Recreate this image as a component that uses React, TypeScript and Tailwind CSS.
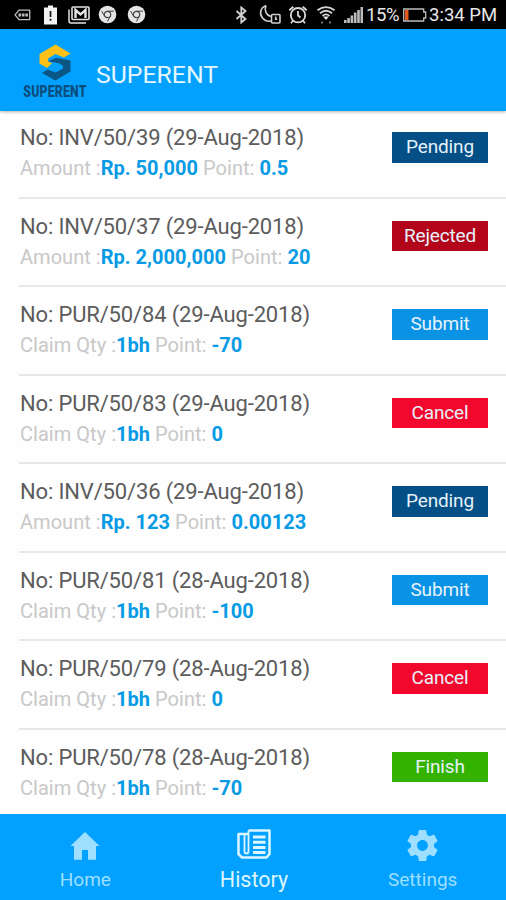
import type { ReactNode } from "react";

type Status = "Pending" | "Rejected" | "Submit" | "Cancel" | "Finish";

interface Entry {
  no: string;
  label: string;
  value: string;
  point: string;
  status: Status;
}

const badgeColors: Record<Status, string> = {
  Pending: "bg-[#034f86]",
  Rejected: "bg-[#b30519]",
  Submit: "bg-[#0a92e4]",
  Cancel: "bg-[#f2082d]",
  Finish: "bg-[#34b200]",
};

const entries: Entry[] = [
  { no: "INV/50/39 (29-Aug-2018)", label: "Amount :", value: "Rp. 50,000", point: "0.5", status: "Pending" },
  { no: "INV/50/37 (29-Aug-2018)", label: "Amount :", value: "Rp. 2,000,000", point: "20", status: "Rejected" },
  { no: "PUR/50/84 (29-Aug-2018)", label: "Claim Qty :", value: "1bh", point: "-70", status: "Submit" },
  { no: "PUR/50/83 (29-Aug-2018)", label: "Claim Qty :", value: "1bh", point: "0", status: "Cancel" },
  { no: "INV/50/36 (29-Aug-2018)", label: "Amount :", value: "Rp. 123", point: "0.00123", status: "Pending" },
  { no: "PUR/50/81 (28-Aug-2018)", label: "Claim Qty :", value: "1bh", point: "-100", status: "Submit" },
  { no: "PUR/50/79 (28-Aug-2018)", label: "Claim Qty :", value: "1bh", point: "0", status: "Cancel" },
  { no: "PUR/50/78 (28-Aug-2018)", label: "Claim Qty :", value: "1bh", point: "-70", status: "Finish" },
];

function ChromeIcon() {
  return (
    <svg width="19" height="19" viewBox="0 0 19 19">
      <circle cx="9.5" cy="9.5" r="8.8" fill="#e4e4e4" />
      <circle cx="9.5" cy="9.5" r="3.2" fill="#e4e4e4" stroke="#444" strokeWidth="1.2" />
      <path d="M9.5 6.2h6.500M6.600 11.200 3.600 6M12.300 11.300 9.400 16.500" stroke="#444" strokeWidth="1" />
    </svg>
  );
}

function StatusBar() {
  return (
    <div className="flex h-[28.5px] shrink-0 items-center bg-black pt-px pl-[14px] text-[#e8e8e8]">
      <svg width="17" height="12" viewBox="0 0 17 12" fill="none" stroke="#bdbdbd" strokeWidth="1.3">
        <path d="M5 1.2h10.7v9.4H5L1 5.9z" strokeLinejoin="round" />
        <path d="M4.500 5.9h9.500" strokeWidth="3" strokeDasharray="2.6 .8" />
      </svg>
      <svg className="ml-[13px]" width="13" height="20" viewBox="0 0 13 20">
        <path d="M4 .5h5v2h4v17H0v-17h4z" fill="#f2f2f2" />
        <path d="M6.5 6v6M6.5 13.7v2" stroke="#111" strokeWidth="1.7" />
      </svg>
      <svg className="ml-[11px]" width="22" height="18" viewBox="0 0 22 18" fill="none" stroke="#e4e4e4">
        <path d="M1 3.5v11.5q0 2 2 2h15" strokeWidth="1.5" />
        <rect x="4" y="1" width="17" height="12.5" rx="1" strokeWidth="1.6" />
        <path d="M7.5 12V4l5 4.4L17.500 4v8" strokeWidth="2.4" />
      </svg>
      <div className="ml-[8px] flex gap-[10px]">
        <ChromeIcon />
        <ChromeIcon />
      </div>
      <svg className="ml-[89px]" width="13" height="18" viewBox="0 0 13 18" fill="none" stroke="#d0d0d0" strokeWidth="1.8">
        <path d="M1.500 5 10.500 13 6.300 16.500V1.500L10.500 5 1.500 13" />
      </svg>
      <svg className="ml-[11px]" width="23" height="21" viewBox="0 0 23 21" fill="none" stroke="#cfcfcf" strokeWidth="1.6">
        <path d="M7 1.500C1 4 .2 10 3.500 14c2.500 3 6 3.500 8.500 3M7 1.500c-2 5 0 9.500 5 11" />
        <rect x="12.500" y="10.500" width="8.500" height="8.500" rx="1" />
        <path d="M16.700 12.500v2.700h1.500" />
      </svg>
      <svg className="ml-[6px]" width="20" height="20" viewBox="0 0 20 20" fill="none" stroke="#dadada" strokeWidth="1.8">
        <circle cx="10" cy="10.200" r="7.200" />
        <path d="M10 6v4.500l2.500 2M1.300 5.200 5.300 1.700M14.700 1.700l4 3.500M5 15.700l-2 2.500M15 15.700l2 2.500" />
      </svg>
      <svg className="ml-[7px]" width="22" height="20" viewBox="0 0 22 20" fill="none" stroke="#d6d6d6" strokeWidth="1.800">
        <path d="M2.500 5.300q8.500-6.500 17 0M5 8.200q6-4.800 12 0M7.500 10.900q3.500-3 7 0" />
        <path d="M8 11.500h6L11 15z" fill="#e0e0e0" stroke="none" />
        <path d="M6 17.500h2M14 17.500h2" stroke="#777" />
      </svg>
      <svg className="ml-[7px]" width="19" height="16" viewBox="0 0 19 16" fill="#bdbdbd">
        <path d="M0 13h2.600v3H0zM3.300 11h2.600v5H3.300zM6.600 8.500h2.600V16H6.600zM9.900 5.500h2.600V16H9.900zM13.200 3h2.600v13h-2.600zM16.500 0h2.500v16h-2.500z" />
      </svg>
      <span className="ml-[3px] w-[37px] text-[18.500px] leading-[28px] tracking-[-0.400px]">15%</span>
      <svg width="24" height="14" viewBox="0 0 24 14" fill="none" stroke="#bdbdbd" strokeWidth="1.300">
        <path d="M.7 1h20v3h2v6h-2v3H.7z" />
        <path d="M2 2h3.500v10H2z" fill="#e2581c" stroke="none" />
      </svg>
      <span className="ml-[2px] text-[18.500px] leading-[28px] whitespace-nowrap">3:34 PM</span>
    </div>
  );
}

function Logo() {
  return (
    <div className="w-[66px]">
      <svg width="66" height="39" viewBox="0 0 66 39">
        <path d="M15.500 11 31.500 1.500 46.500 10.500 40 14.500 31.500 11 24 15.500V18l4 2.300L23 25 15.500 20.500z" fill="#fcc016" />
        <path d="M24 18.300 32.500 14.800 46.500 17.500V28.500L31.500 37.500 18 30 23.500 26.500 31.500 29.500 39 25.500V22.500L34 20z" fill="#0c5686" />
      </svg>
      <div className="flex h-[18px] w-[62px] items-center justify-center">
        <span className="scale-x-[0.72] text-[17px] leading-[20px] font-black tracking-[0.300px] whitespace-nowrap text-[#0b4d7c]">
          SUPERENT
        </span>
      </div>
    </div>
  );
}

function Header() {
  return (
    <header className="z-10 flex h-[82.5px] shrink-0 items-start bg-[#02a1ff] pl-[24px] shadow-[0_1px_3px_rgba(0,0,0,0.3)]">
      <div className="pt-[14.500px]">
        <Logo />
      </div>
      <h1 className="ml-[6px] pt-[30.500px] text-[24.800px] leading-[32px] text-[#e4f6ff]">SUPERENT</h1>
    </header>
  );
}

function Row({ entry }: { entry: Entry }) {
  return (
    <li className="ml-[19px] flex h-[88.5px] shrink-0 items-start justify-between border-b-2 border-[#e8e8e8] pr-[18px]">
      <div className="pt-[14px] whitespace-nowrap">
        <p className="pl-px text-[22px] leading-[28px] tracking-[-0.150px] text-[#5c5c5c]">No: {entry.no}</p>
        <p className="pl-px text-[20px] leading-[32px] tracking-[0.030px] text-[#c8c8c8]">
          {entry.label}
          <b className="font-bold text-[#089be5]">{entry.value}</b> Point:{" "}
          <b className="font-bold text-[#089be5]">{entry.point}</b>
        </p>
      </div>
      <span
        className={`mt-[22px] flex h-[30.500px] w-[96px] items-center justify-center text-[19px] tracking-[-0.150px] text-[#e6f2fa] ${badgeColors[entry.status]}`}
      >
        {entry.status}
      </span>
    </li>
  );
}

function Tab({ label, active, children }: { label: string; active?: boolean; children: ReactNode }) {
  return (
    <button className={`flex flex-1 flex-col items-center pt-[13px] pl-[2px] ${active ? "text-[#dcf6ff]" : "text-[#9edfff]"}`}>
      <span className="flex h-[37px] items-center justify-center">{children}</span>
      <span className={`leading-[32px] ${active ? "text-[21.500px]" : "text-[19px]"}`}>{label}</span>
    </button>
  );
}

export default function App() {
  return (
    <div className="flex h-[900px] w-[506px] flex-col overflow-hidden bg-[#fefefe] font-[Roboto,sans-serif]">
      <StatusBar />
      <Header />
      <ul className="-mt-[1px] flex min-h-0 flex-1 flex-col overflow-hidden">
        {entries.map((e) => (
          <Row key={e.no} entry={e} />
        ))}
      </ul>
      <nav className="flex h-[86px] shrink-0 bg-[#02a1ff]">
        <Tab label="Home">
          <svg width="30" height="28" viewBox="0 0 30 28" fill="currentColor">
            <path d="M15 0 29.500 14H26V27.700H18V18H12V27.700H4V14H.5z" />
          </svg>
        </Tab>
        <Tab label="History" active>
          <svg className="-mt-[4px]" width="34" height="30" viewBox="0 0 34 30" fill="none" stroke="currentColor">
            <path d="M11.500 1.500H32.500V25L29.500 28.500H5L1.500 25V5H11.500" strokeWidth="2.500" strokeLinejoin="round" />
            <path d="M11.500 1.500V22.500q0 2-2 2t-2-2V5" strokeWidth="1.800" />
            <path d="M16 8h12.500M16 13.200h12.500M16 18.400h12.500M16 23.500h12.500" strokeWidth="3" />
          </svg>
        </Tab>
        <Tab label="Settings">
          <svg width="37" height="37" viewBox="0 0 24 24" fill="currentColor">
            <path d="M19.430 12.980c.04-.32.07-.64.07-.98s-.03-.66-.07-.98l2.110-1.650c.19-.15.24-.42.12-.64l-2-3.460c-.12-.22-.39-.3-.61-.22l-2.490 1c-.52-.4-1.080-.73-1.690-.98l-.38-2.650C14.460 2.180 14.250 2 14 2h-4c-.25 0-.46.18-.49.42l-.38 2.650c-.61.25-1.170.59-1.690.98l-2.490-1c-.23-.09-.49 0-.61.22l-2 3.460c-.13.22-.07.49.12.64l2.110 1.650c-.04.32-.07.65-.07.98s.03.66.07.98l-2.110 1.650c-.19.15-.24.42-.12.64l2 3.460c.12.22.39.3.61.22l2.490-1c.52.4 1.080.73 1.690.98l.38 2.650c.03.24.24.42.49.42h4c.25 0 .46-.18.49-.42l.38-2.650c.61-.25 1.170-.59 1.690-.98l2.490 1c.23.09.49 0 .61-.22l2-3.460c.12-.22.07-.49-.12-.64l-2.110-1.650zM12 15.500c-1.930 0-3.500-1.570-3.500-3.500s1.570-3.500 3.500-3.500 3.500 1.570 3.500 3.500-1.570 3.500-3.500 3.500z" />
          </svg>
        </Tab>
      </nav>
    </div>
  );
}
